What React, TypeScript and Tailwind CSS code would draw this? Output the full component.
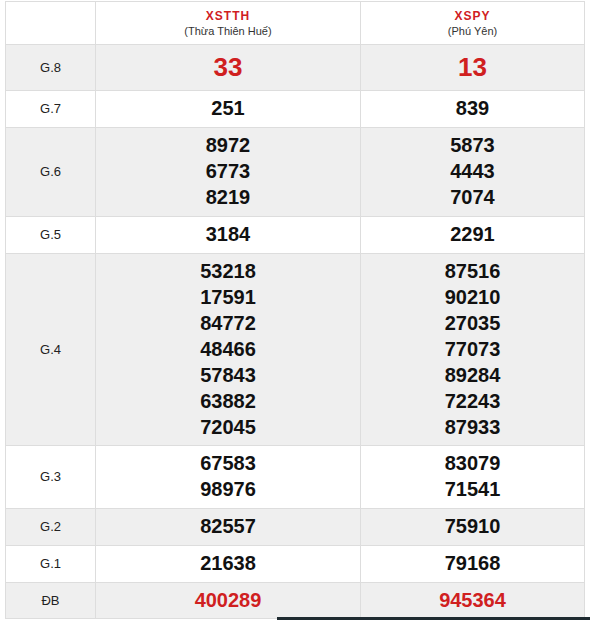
import React from "react";

type Row = { label: string; a: string[]; b: string[]; kind?: "g8" | "db"; h: number };

const rows: Row[] = [
  { label: "G.8", a: ["33"], b: ["13"], kind: "g8", h: 46 },
  { label: "G.7", a: ["251"], b: ["839"], h: 37 },
  { label: "G.6", a: ["8972", "6773", "8219"], b: ["5873", "4443", "7074"], h: 89 },
  { label: "G.5", a: ["3184"], b: ["2291"], h: 37 },
  {
    label: "G.4",
    a: ["53218", "17591", "84772", "48466", "57843", "63882", "72045"],
    b: ["87516", "90210", "27035", "77073", "89284", "72243", "87933"],
    h: 192,
  },
  { label: "G.3", a: ["67583", "98976"], b: ["83079", "71541"], h: 63 },
  { label: "G.2", a: ["82557"], b: ["75910"], h: 37 },
  { label: "G.1", a: ["21638"], b: ["79168"], h: 37 },
  { label: "ĐB", a: ["400289"], b: ["945364"], kind: "db", h: 36 },
];

function Nums({ list, kind }: { list: string[]; kind?: "g8" | "db" }) {
  if (kind === "g8") {
    return <div className="text-[26px] leading-[34px] font-bold text-[#d0201f]">{list[0]}</div>;
  }
  if (kind === "db") {
    return <div className="text-[20px] leading-[26px] font-bold text-[#d0201f]">{list[0]}</div>;
  }
  return (
    <div className="flex flex-col items-center">
      {list.map((n, i) => (
        <div key={i} className="text-[20px] leading-[26px] font-bold text-[#111]">
          {n}
        </div>
      ))}
    </div>
  );
}

export default function App() {
  return (
    <div
      className="relative w-[590px] h-[620px] bg-white overflow-hidden"
      style={{ fontFamily: '"Liberation Sans", Arial, sans-serif' }}
    >
      <div className="pt-[1px] pl-[5px]">
        <table className="border-collapse w-[579px] table-fixed">
          <colgroup>
            <col className="w-[90px]" />
            <col className="w-[265px]" />
            <col className="w-[224px]" />
          </colgroup>
          <thead>
            <tr className="h-[43px] bg-white">
              <th className="border border-[#dddddd] p-0"></th>
              <th className="border border-[#dddddd] p-0 text-center align-middle font-normal">
                <div className="text-[12px] leading-[16px] font-bold tracking-[1px] text-[#d0201f]">XSTTH</div>
                <div className="text-[11px] leading-[15px] text-[#333]">(Thừa Thiên Huế)</div>
              </th>
              <th className="border border-[#dddddd] p-0 text-center align-middle font-normal">
                <div className="text-[12px] leading-[16px] font-bold tracking-[1px] text-[#d0201f]">XSPY</div>
                <div className="text-[11px] leading-[15px] text-[#333]">(Phú Yên)</div>
              </th>
            </tr>
          </thead>
          <tbody>
            {rows.map((r, i) => (
              <tr
                key={r.label}
                className={i % 2 === 0 ? "bg-[#efefef]" : "bg-white"}
                style={{ height: r.h }}
              >
                <td className="border border-[#dddddd] p-0 text-center align-middle text-[13px] text-[#222]">
                  {r.label}
                </td>
                <td className="border border-[#dddddd] p-0 pb-[2px] text-center align-middle">
                  <Nums list={r.a} kind={r.kind} />
                </td>
                <td className="border border-[#dddddd] p-0 pb-[2px] text-center align-middle">
                  <Nums list={r.b} kind={r.kind} />
                </td>
              </tr>
            ))}
          </tbody>
        </table>
      </div>
      <div className="absolute left-[277px] top-[617px] w-[313px] h-[3px] bg-[#1f2b31]"></div>
    </div>
  );
}
